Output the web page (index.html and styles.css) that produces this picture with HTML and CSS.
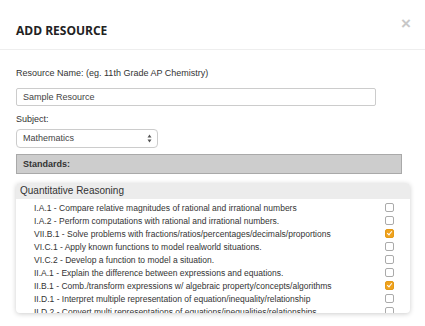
FILE: index.html
```html
<!DOCTYPE html>
<html>
<head>
<meta charset="utf-8">
<link rel="stylesheet" href="styles.css">
</head>
<body>
<div class="modal">
  <div class="modal-header">
    <h4 class="title">ADD RESOURCE</h4>
    <span class="close">&times;</span>
  </div>
  <div class="modal-body">
    <label class="label">Resource Name: (eg. 11th Grade AP Chemistry)</label>
    <div class="input">Sample Resource</div>
    <label class="label subject-label">Subject:</label>
    <div class="select"><span>Mathematics</span>
      <svg class="arrows" width="5" height="9" viewBox="0 0 5 9"><path d="M2.5 0.5 L4.5 3.5 L0.5 3.5 Z M2.5 8.5 L4.5 5.5 L0.5 5.5 Z" fill="#555"/></svg>
    </div>
    <div class="standards">Standards:</div>
    <div class="list">
      <div class="group">Quantitative Reasoning</div>
      <div class="item"><span>I.A.1 - Compare relative magnitudes of rational and irrational numbers</span><i class="cb"></i></div>
      <div class="item"><span>I.A.2 - Perform computations with rational and irrational numbers.</span><i class="cb"></i></div>
      <div class="item"><span>VII.B.1 - Solve problems with fractions/ratios/percentages/decimals/proportions</span><i class="cb on"></i></div>
      <div class="item"><span>VI.C.1 - Apply known functions to model realworld situations.</span><i class="cb"></i></div>
      <div class="item"><span>VI.C.2 - Develop a function to model a situation.</span><i class="cb"></i></div>
      <div class="item"><span>II.A.1 - Explain the difference between expressions and equations.</span><i class="cb"></i></div>
      <div class="item"><span>II.B.1 - Comb./transform expressions w/ algebraic property/concepts/algorithms</span><i class="cb on"></i></div>
      <div class="item"><span>II.D.1 - Interpret multiple representation of equation/inequality/relationship</span><i class="cb"></i></div>
      <div class="item"><span>II.D.2 - Convert multi representations of equations/inequalities/relationships</span><i class="cb"></i></div>
    </div>
  </div>
</div>
</body>
</html>
```
FILE: styles.css
```css
html, body { margin: 0; padding: 0; background: #fff; }
body { font-family: "Liberation Sans", Arial, sans-serif; color: #333; }
.modal { width: 425px; height: 326px; overflow: hidden; }
.modal-header {
  height: 50px; border-bottom: 1px solid #eee; box-sizing: border-box;
  display: flex; justify-content: space-between; padding: 0 16px;
}
.title { margin: 0; padding-top: 22px; font-family: "Open Sans", sans-serif; font-weight: 700; font-size: 12px; color: #222; }
.close { color: #c8c8c8; font-size: 17px; font-weight: 700; padding-top: 15px; margin-right: -2px; line-height: 1; }
.modal-body { padding: 16px 16px 0 16px; }
.label { display: block; font-size: 9px; color: #333; line-height: 12px; margin-top: 1px; }
.input {
  margin-top: 9px; width: 360px; height: 18px; box-sizing: border-box;
  border: 1px solid #ccc; border-radius: 2px; font-size: 9px; line-height: 16px; padding-left: 6px; color: #444;
}
.subject-label { margin-top: 7px; }
.select {
  margin-top: 4px; width: 142px; height: 19px; box-sizing: border-box;
  border: 1px solid #ccc; border-radius: 4px; font-size: 9px; line-height: 17px; padding: 0 5px 0 6px;
  display: flex; justify-content: space-between; align-items: center; color: #444;
}
.standards {
  margin-top: 6px; width: 386px; height: 20px; box-sizing: border-box;
  background: #cdcdcd; border: 1px solid #a9a9a9; font-weight: 700; font-size: 9px; line-height: 18px; padding-left: 6px; color: #333;
}
.list {
  margin-top: 9px; width: 394px; height: 130px; overflow: hidden; box-sizing: border-box;
  border-radius: 4px; box-shadow: 0 1px 5px rgba(0,0,0,0.2); background: #fff;
}
.group { background: #ececec; font-size: 10px; line-height: 16px; padding-left: 4px; color: #333; height: 16px; }
.item { display: flex; justify-content: space-between; align-items: center; height: 13px; font-size: 8.5px; color: #333; padding-left: 18px; padding-right: 16px; }
.group + .item { margin-top: 2px; }
.cb { width: 7px; height: 7px; border: 1px solid #aaa; border-radius: 2px; background: #fff; }
.cb.on { background: #f0a21d; border-color: #e39a18; position: relative; }
.cb.on::after { content: ""; position: absolute; left: 2px; top: 0px; width: 2px; height: 4px; border: solid #fff; border-width: 0 1px 1px 0; transform: rotate(40deg); }
```
